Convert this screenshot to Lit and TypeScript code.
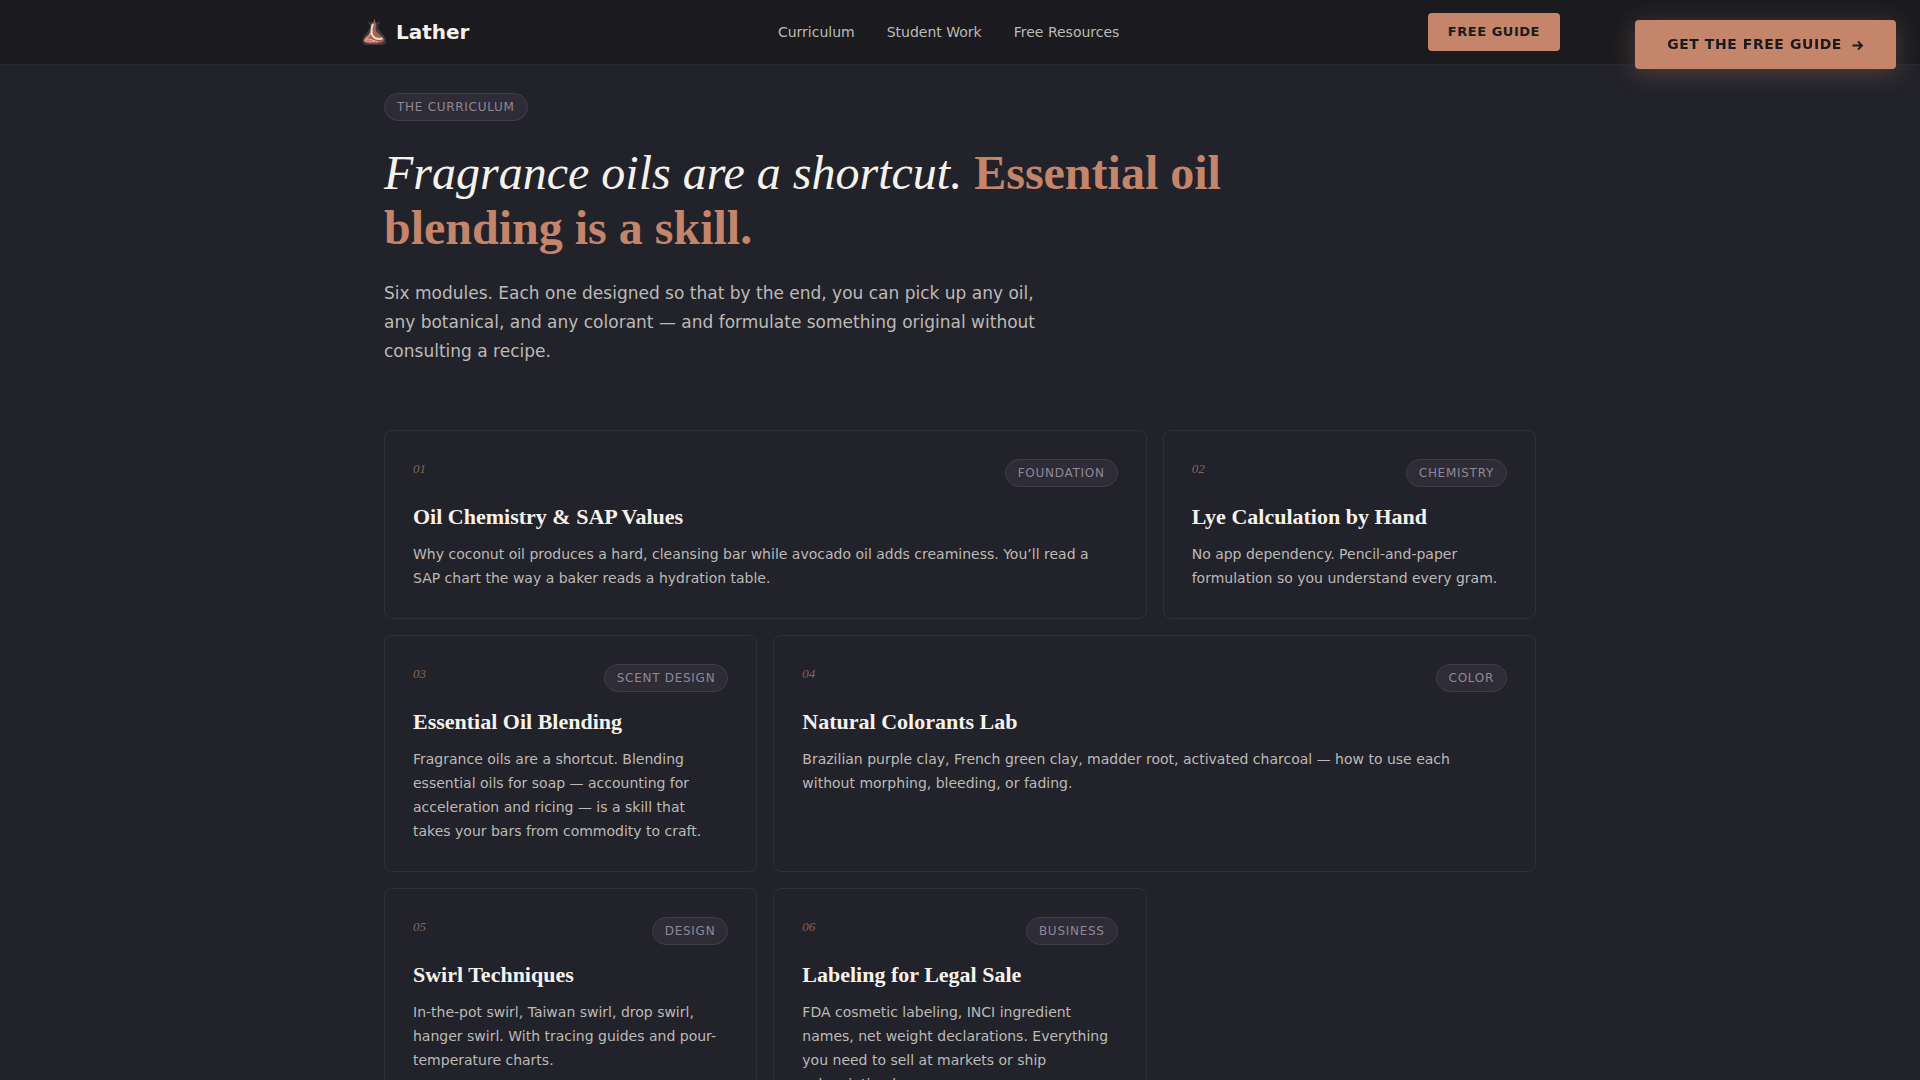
import { LitElement, html, css, svg } from "lit";
import { customElement, property } from "lit/decorators.js";

interface Module {
  num: string;
  tag: string;
  title: string;
  text: string;
  wide?: boolean;
}

const MODULES: Module[] = [
  { num: "01", tag: "Foundation", title: "Oil Chemistry & SAP Values", wide: true,
    text: "Why coconut oil produces a hard, cleansing bar while avocado oil adds creaminess. You’ll read a SAP chart the way a baker reads a hydration table." },
  { num: "02", tag: "Chemistry", title: "Lye Calculation by Hand",
    text: "No app dependency. Pencil-and-paper formulation so you understand every gram." },
  { num: "03", tag: "Scent Design", title: "Essential Oil Blending",
    text: "Fragrance oils are a shortcut. Blending essential oils for soap — accounting for acceleration and ricing — is a skill that takes your bars from commodity to craft." },
  { num: "04", tag: "Color", title: "Natural Colorants Lab", wide: true,
    text: "Brazilian purple clay, French green clay, madder root, activated charcoal — how to use each without morphing, bleeding, or fading." },
  { num: "05", tag: "Design", title: "Swirl Techniques",
    text: "In-the-pot swirl, Taiwan swirl, drop swirl, hanger swirl. With tracing guides and pour-temperature charts." },
  { num: "06", tag: "Business", title: "Labeling for Legal Sale",
    text: "FDA cosmetic labeling, INCI ingredient names, net weight declarations. Everything you need to sell at markets or ship subscription boxes." },
];

const pillStyles = css`
  .pill {
    display: inline-block;
    padding: 4px 12px;
    border: 1px solid #3f3d48;
    border-radius: 14px;
    background: #2e2c36;
    color: #918896;
    font-size: 12px;
    line-height: 18px;
    letter-spacing: 0.06em;
    text-transform: uppercase;
    white-space: nowrap;
  }
`;

@customElement("module-card")
export class ModuleCard extends LitElement {
  @property({ attribute: false }) module!: Module;

  static styles = [
    pillStyles,
    css`
      :host {
        display: block;
        box-sizing: border-box;
        padding: 28px;
        border: 1px solid #2f2f39;
        border-radius: 8px;
      }
      .top {
        display: flex;
        justify-content: space-between;
        align-items: flex-start;
        margin-bottom: 16px;
      }
      .num {
        color: #8a6458;
        font: italic 13px/20px "Liberation Serif", serif;
      }
      .title {
        margin: 0 0 11px;
        color: #f5f2ec;
        font: bold 22px/28px "Liberation Serif", serif;
      }
      .text {
        margin: 0;
        padding-right: 6px;
        color: #bdbab6;
        font-size: 14px;
        line-height: 24px;
      }
    `,
  ];

  render() {
    const m = this.module;
    return html`
      <div class="top"><span class="num">${m.num}</span><span class="pill">${m.tag}</span></div>
      <h3 class="title">${m.title}</h3>
      <p class="text">${m.text}</p>
    `;
  }
}

// Glass flask with a swirl of poured soap inside.
const logo = svg`
  <path d="M7.500 3.500 Q14 5.500 20.500 3.500 Q18 6 18 9 C18.500 13 25.500 17 26 22 Q26.500 27 22 27 L6.500 27 Q2 27 2.500 22 C3 17 9.500 13 10 9 Q10 6 7.500 3.500 Z" fill="#393b41"/>
  <path d="M12.500 4.500 Q14 3.500 15.500 4.500 C16.500 7 15.500 9 15.800 12 C16.500 15.500 23 18 24 21.500 C24 24 21 25.500 14 25.500 C8 25.500 4 25 4 22.500 C4 19.500 9 17.500 10.300 14 C11.300 11 10.800 7.500 12.500 4.500 Z" fill="#a9614f"/>
  <path d="M10.800 14.500 C10.500 18.500 5.500 20 5 22.500 C7 24 11 23.500 15 23" fill="none" stroke="#d98d74" stroke-width="2"/>
  <path d="M12.800 6 C11.500 10 11 14.500 12.500 17.500 C14.500 20.500 18.500 21.500 22.500 20.500" fill="none" stroke="#ecdcd8" stroke-width="2"/>
  <path d="M6 21.500 C10 20 12 22.500 17.500 23.800" fill="none" stroke="#e6beb0" stroke-width="1"/>
  <path d="M14.500 1.500 L14.500 4.500" stroke="#b5673c" stroke-width="1.200"/>
`;

@customElement("app-root")
export class AppRoot extends LitElement {
  static styles = [
    pillStyles,
    css`
      :host {
        display: block;
        height: 100vh;
        overflow: hidden;
        background: #22222a;
        color: #bdbab6;
        font-family: "DejaVu Sans", sans-serif;
      }
      .header {
        border-bottom: 1px solid #27272c;
        background: #1b1b1f;
      }
      .bar {
        display: flex;
        justify-content: space-between;
        align-items: center;
        box-sizing: border-box;
        max-width: 1200px;
        height: 64px;
        margin: 0 auto;
      }
      .brand {
        display: flex;
        align-items: center;
        gap: 8px;
        color: #f5f2ec;
        font-size: 20px;
        font-weight: bold;
        text-decoration: none;
      }
      .logo {
        width: 28px;
        height: 28px;
      }
      .nav {
        display: flex;
        gap: 32px;
      }
      .link {
        color: #bdbab6;
        font-size: 14px;
        text-decoration: none;
      }
      .button {
        border-radius: 4px;
        background: #c4856a;
        color: #1b1b1f;
        font-size: 13px;
        line-height: 18px;
        font-weight: bold;
        letter-spacing: 0.04em;
        text-transform: uppercase;
        text-decoration: none;
        padding: 10px 20px;
      }
      .floating {
        position: fixed;
        top: 20px;
        right: 24px;
        display: flex;
        align-items: center;
        gap: 10px;
        padding: 16px 32px;
        font-size: 14px;
        line-height: 17px;
        box-shadow: 0 4px 24px rgba(196, 133, 106, 0.3);
      }
      .arrow {
        width: 12px;
        height: 12px;
        fill: none;
        stroke: currentColor;
        stroke-width: 1.8;
      }
      .section {
        box-sizing: border-box;
        max-width: 1200px;
        margin: 0 auto;
        padding: 28px 24px;
      }
      .heading {
        max-width: 900px;
        margin: 24px 0;
        color: #c4856a;
        font: bold 48px/55px "Liberation Serif", serif;
      }
      .lead {
        color: #f5f2ec;
        font-weight: normal;
      }
      .intro {
        max-width: 660px;
        margin: 0 0 64px;
        font-size: 17px;
        line-height: 29px;
      }
      .grid {
        display: grid;
        grid-template-columns: repeat(3, minmax(0, 1fr));
        gap: 16px;
      }
      .wide {
        grid-column: span 2;
      }
    `,
  ];

  render() {
    return html`
      <header class="header">
        <div class="bar">
          <a class="brand" href="#"><svg class="logo" viewBox="0 0 28 28" aria-hidden="true">${logo}</svg>Lather</a>
          <nav class="nav">
            <a class="link" href="#curriculum">Curriculum</a>
            <a class="link" href="#work">Student Work</a>
            <a class="link" href="#resources">Free Resources</a>
          </nav>
          <a class="button" href="#guide">Free Guide</a>
        </div>
      </header>
      <a class="button floating" href="#guide">Get the free guide
        <svg class="arrow" viewBox="0 0 12 12" aria-hidden="true"><path d="M0.500 6.500 H10 M6 2.500 L10 6.500 L6 10.500" /></svg>
      </a>
      <main class="section" id="curriculum">
        <span class="pill">The Curriculum</span>
        <h2 class="heading"><em class="lead">Fragrance oils are a shortcut.</em> Essential oil blending is a skill.</h2>
        <p class="intro">Six modules. Each one designed so that by the end, you can pick up any oil, any botanical, and any colorant — and formulate something original without consulting a recipe.</p>
        <div class="grid">
          ${MODULES.map((m) => html`<module-card class=${m.wide ? "wide" : ""} .module=${m}></module-card>`)}
        </div>
      </main>
    `;
  }
}
